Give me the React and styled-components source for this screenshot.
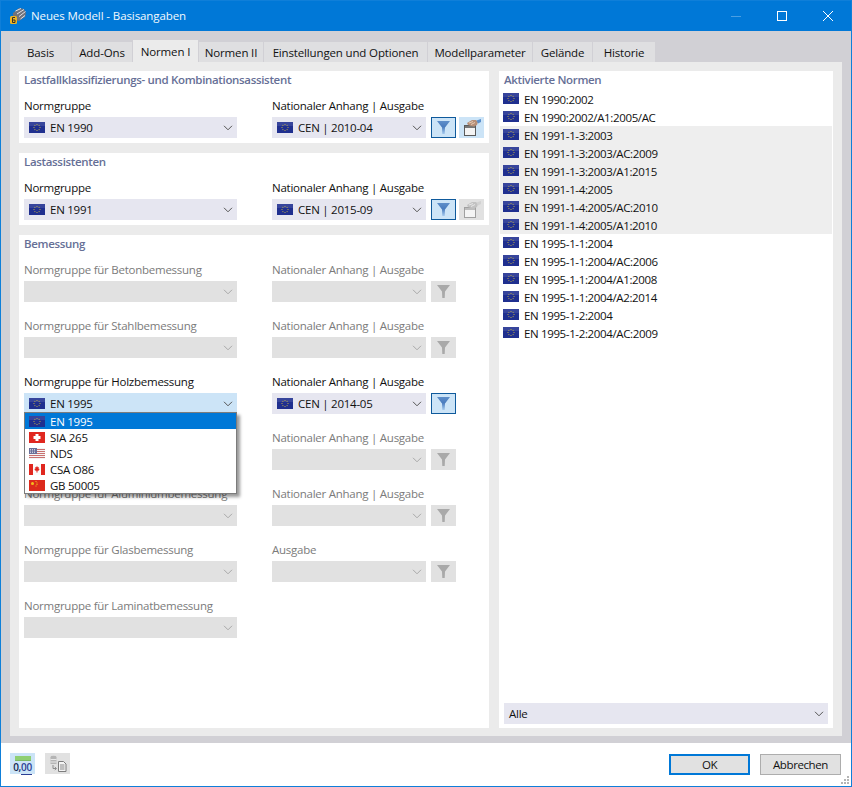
import React from "react"
import styled, { createGlobalStyle } from "styled-components"

const GlobalStyle = createGlobalStyle`
  html, body {
    margin: 0;
    padding: 0;
    background: #fff;
  }
  body {
    font-family: "Open Sans", "Noto Sans", "Liberation Sans", sans-serif;
    font-size: 11.5px;
    letter-spacing: -0.25px;
    color: #111;
  }
`

const Window = styled.div`
  width: 852px;
  height: 787px;
  box-sizing: border-box;
  border: 1px solid #0f7fd9;
  display: flex;
  flex-direction: column;
  background: #fff;
  overflow: hidden;
`

const TitleBar = styled.div`
  height: 30px;
  box-sizing: border-box;
  flex: none;
  background: #0078d7;
  color: #f2f8fd;
  display: flex;
  align-items: center;
  padding: 0 0 1px 8px;
  letter-spacing: -0.1px;
`

const TitleText = styled.span`
  margin-left: 4px;
  flex: 1;
`

const WinButton = styled.div`
  width: 46px;
  height: 30px;
  display: flex;
  align-items: center;
  justify-content: center;
`

const Body = styled.div`
  flex: 1;
  background: #d1d0d5;
  padding: 9px 9px 7px;
  display: flex;
  flex-direction: column;
  min-height: 0;
`

const TabStrip = styled.div`
  height: 22px;
  flex: none;
  display: flex;
  align-items: flex-end;
  gap: 1px;
`

const Tab = styled.div`
  width: ${(p) => p.$w}px;
  height: ${(p) => (p.$active ? 22 : 20)}px;
  background: ${(p) => (p.$active ? "#ebebeb" : "#dfdfe1")};
  display: flex;
  align-items: center;
  justify-content: center;
  white-space: nowrap;
  letter-spacing: -0.15px;
`

const TabPanel = styled.div`
  flex: 1;
  min-height: 0;
  background: #ebebeb;
  padding: 9px 9px 8px;
  display: grid;
  grid-template-columns: 470px 334px;
  gap: 10px;
`

const LeftColumn = styled.div`
  display: flex;
  flex-direction: column;
  gap: 10px;
`

const Section = styled.section`
  background: #fff;
  padding: 0 5px ${(p) => (p.$list ? 4 : 5)}px;
  flex: ${(p) => (p.$grow ? 1 : "none")};
  display: flex;
  flex-direction: column;
  position: relative;
`

const SectionTitle = styled.div`
  height: 18px;
  line-height: 18px;
  font-weight: 600;
  letter-spacing: -0.33px;
  color: #666f96;
  white-space: nowrap;
`

const Rows = styled.div`
  display: flex;
  flex-direction: column;
  gap: 16px;
  margin-top: 9px;
`

const Row = styled.div`
  display: grid;
  grid-template-columns: 243px 154px 25px 25px;
  column-gap: 5px;
  align-items: end;
`

const Field = styled.div`
  position: relative;
  width: ${(p) => (p.$first ? 213 : 154)}px;
  grid-column: ${(p) => (p.$first ? 1 : 2)};
`

const Label = styled.div`
  height: 16px;
  line-height: 16px;
  margin-bottom: 3px;
  white-space: nowrap;
  color: ${(p) => (p.$disabled ? "#7b7b7b" : "#111")};
`

const SelectBox = styled.div`
  height: 21px;
  box-sizing: border-box;
  display: flex;
  align-items: center;
  gap: 5px;
  padding: 0 5px;
  background: ${(p) =>
    p.$disabled ? "#e1e1e1" : p.$open ? "#cce4f7" : "#e6e6f0"};
`

const SelectValue = styled.span`
  flex: 1;
  white-space: nowrap;
`

const Chevron = styled.svg`
  width: 10px;
  height: 6px;
  margin-right: -1px;
  flex: none;
`

const ToolButton = styled.div`
  width: 25px;
  height: 21px;
  box-sizing: border-box;
  display: flex;
  align-items: center;
  justify-content: center;
  grid-column: ${(p) => p.$col};
  margin-left: ${(p) => (p.$col === 4 ? -2 : 0)}px;
  background: ${(p) => (p.$disabled ? "#e1e1e1" : "#cce4f7")};
  border: ${(p) => (p.$pressed ? "1px solid #0f5a9c" : "none")};
`

const FlagSvg = styled.svg`
  width: 16px;
  height: 11px;
  flex: none;
  display: block;
`

const Dropdown = styled.div`
  position: absolute;
  left: 0;
  top: 38px;
  width: 213px;
  box-sizing: border-box;
  background: #fff;
  border: 1px solid #7c7c7c;
  box-shadow: 3px 3px 3px rgba(0, 0, 0, 0.4);
  z-index: 5;
`

const DropdownItem = styled.div`
  height: 16px;
  display: flex;
  align-items: center;
  gap: 5px;
  padding-left: 4px;
  background: ${(p) => (p.$selected ? "#0078d7" : "transparent")};
  color: ${(p) => (p.$selected ? "#fff" : "#111")};
`

const NormList = styled.div`
  flex: 1;
  margin: 1px -4px 0;
`

const NormRow = styled.div`
  height: 18px;
  display: flex;
  gap: 5px;
  padding-left: 3px;
  line-height: 19px;
  letter-spacing: -0.36px;
  background: ${(p) => (p.$shaded ? "#eeeeee" : "transparent")};
`

const NormFlag = styled.div`
  padding-top: 3px;
`

const Footer = styled.div`
  height: 43px;
  flex: none;
  display: flex;
  align-items: center;
  padding: 0 10px 0 9px;
  position: relative;
`

const FootIcon = styled.div`
  width: 25px;
  height: 21px;
  margin-right: 10px;
  margin-top: -2px;
  display: flex;
  align-items: center;
  justify-content: center;
  background: ${(p) => (p.$disabled ? "#e1e1e1" : "#cce4f7")};
`

const Spacer = styled.div`
  flex: 1;
`

const DialogButton = styled.button`
  width: 81px;
  height: 21px;
  box-sizing: border-box;
  margin: -1px 0 0 ${(p) => (p.$primary ? 0 : 10)}px;
  padding: 0;
  background: #e1e1e1;
  border: ${(p) => (p.$primary ? "2px solid #0078d7" : "1px solid #adadad")};
  font: inherit;
  letter-spacing: -0.4px;
  color: #111;
`

const Grip = styled.svg`
  position: absolute;
  right: 1px;
  bottom: 1px;
  width: 10px;
  height: 10px;
`

const Flag = ({ code = "eu" }) => {
  if (code === "ch") {
    return (
      <FlagSvg viewBox="0 0 16 11">
        <rect width="16" height="11" fill="#e0271f" />
        <path d="M6.5 2h3v2h2v3h-2v2h-3V7h-2V4h2z" fill="#fff" />
      </FlagSvg>
    )
  }
  if (code === "us") {
    return (
      <FlagSvg viewBox="0 0 16 11">
        <rect width="16" height="11" fill="#f4f4f4" />
        {[1, 3, 5, 7, 9].map((y) => (
          <rect key={y} y={y} width="16" height="1" fill="#c9706f" />
        ))}
        <rect width="8" height="6" fill="#6a7098" />
        <path d="M1 1.5h6M1 3h6M1 4.5h6" stroke="#c8cbdc" strokeDasharray="1 1" />
      </FlagSvg>
    )
  }
  if (code === "ca") {
    return (
      <FlagSvg viewBox="0 0 16 11">
        <rect width="16" height="11" fill="#fbfbfb" />
        <rect width="4" height="11" fill="#e0271f" />
        <rect x="12" width="4" height="11" fill="#e0271f" />
        <path d="M8 2l1 1.500 1-.4-.4 2 1-.4-.6 1.800-1.500.2V8.500h-1V6.700L6 6.500l-.6-1.800 1 .4-.4-2 1 .4z" fill="#e0271f" />
      </FlagSvg>
    )
  }
  if (code === "cn") {
    return (
      <FlagSvg viewBox="0 0 16 11">
        <rect width="16" height="11" fill="#dc2a1c" />
        <circle cx="3.500" cy="3.500" r="1.500" fill="#f3c21b" />
        <path d="M6.500 1.500h1M7.500 3h1M7.500 4.500h1M6.500 6h1" stroke="#f3c21b" />
      </FlagSvg>
    )
  }
  const stars = [0, 1, 2, 3, 4, 5, 6, 7].map((i) => {
    const a = (i * Math.PI) / 4
    return [8 + Math.cos(a) * 3, 5.5 + Math.sin(a) * 3]
  })
  return (
    <FlagSvg viewBox="0 0 16 11">
      <rect width="16" height="11" fill="#1f2f8f" />
      <rect width="16" height="4" fill="#4a57a8" opacity="0.55" />
      {stars.map(([x, y], i) => (
        <rect key={i} x={x - 0.5} y={y - 0.5} width="1" height="1" fill="#b9a94a" />
      ))}
    </FlagSvg>
  )
}

const ChevronIcon = ({ disabled }) => (
  <Chevron viewBox="0 0 10 6">
    <path
      d="M1 .8l4 4 4-4"
      fill="none"
      stroke={disabled ? "#a9a9a9" : "#555"}
      strokeWidth="1"
    />
  </Chevron>
)

const FunnelIcon = ({ disabled }) => (
  <svg width="13" height="13" viewBox="0 0 13 13">
    <defs>
      <linearGradient id="funnelBlue" x1="0" y1="0" x2="0" y2="1">
        <stop offset="0" stopColor="#5f8fca" />
        <stop offset="0.45" stopColor="#4a7cbe" />
        <stop offset="1" stopColor="#a4c9ee" />
      </linearGradient>
    </defs>
    <path
      d="M0 0h13L8 6.500 7.700 13H5.300L5 6.500z"
      fill={disabled ? "#a9a9a9" : "url(#funnelBlue)"}
    />
  </svg>
)

const WizardIcon = ({ disabled }) => (
  <svg width="21" height="17" viewBox="0 0 21 17">
    <rect x="3.500" y="6.500" width="11" height="10" fill="#f4f4f4" stroke={disabled ? "#a0a0a0" : "#5a5a5a"} />
    <rect x="4" y="7" width="10" height="2" fill={disabled ? "#bdbdbd" : "#777"} />
    <path d="M6 4l5-3h4l2 2-1 3-3 1.500-3-.5-3-1z" fill={disabled ? "#c2c2c2" : "#b68f78"} />
    <path d="M8 4l4-1.500M10 5.500l4-2" stroke={disabled ? "#e8e8e8" : "#e6cdb8"} />
    <path d="M15.500 1.500L20 0v3l-3 1.500z" fill={disabled ? "#d2d2d2" : "#5c90cc"} />
  </svg>
)

const AppIcon = () => (
  <svg width="18" height="18" viewBox="0 0 18 18">
    <path d="M4 6l6-5 5 1 2 4-1 4-6 4-4-1-2-4z" fill="#70737c" />
    <path d="M6.500 4L12 1.500M8 7l7-4.500M10 9.500l6.500-5M11.500 12l4.500-3.500" stroke="#dfe1e8" />
    <rect x="1" y="9" width="7" height="8" rx="1.500" fill="#f0b520" />
    <path d="M6 10.500H3.500v5H6v-2.500H3.500" fill="none" stroke="#33302a" strokeWidth="1" />
  </svg>
)

const DecimalText = styled.div`
  font-family: "Open Sans", sans-serif;
  font-size: 10px;
  font-weight: 600;
  line-height: 10px;
  letter-spacing: -0.3px;
  color: #14264f;
  white-space: nowrap;
`

const Ruler = styled.div`
  width: 16px;
  height: 4px;
  background: #8fcf72;
  border-bottom: 1px solid #7cb765;
  margin-bottom: 1px;
`

const DecimalStack = styled.div`
  display: flex;
  flex-direction: column;
  align-items: center;
`

const Underlined = styled.span`
  color: #2b3f94;
  border-bottom: 1px solid #2b3f94;
`

const ExportIcon = () => (
  <svg width="18" height="17" viewBox="0 0 18 17">
    <ellipse cx="4.500" cy="2" rx="3" ry="1.300" fill="#b5b5b5" />
    <rect x="1.500" y="2" width="6" height="7" fill="#b5b5b5" />
    <path d="M1.500 4.500h6M1.500 7h6" stroke="#e8e8e8" />
    <path d="M4 10v3.500h3M5.800 12l1.700 1.500-1.700 1.500" fill="none" stroke="#8c8c8c" />
    <path d="M9.500 6.500h5l2.500 2.500v7.500H9.500z" fill="#f4f4f4" stroke="#7d7d7d" />
    <path d="M11 10h4.500M11 12h4.500M11 14h4.500" stroke="#8a8a8a" />
  </svg>
)

const dropdownItems = [
  { code: "eu", name: "EN 1995" },
  { code: "ch", name: "SIA 265" },
  { code: "us", name: "NDS" },
  { code: "ca", name: "CSA O86" },
  { code: "cn", name: "GB 50005" },
]

const NormSelect = ({ label, value, disabled, open, first }) => (
  <Field $first={first}>
    <Label $disabled={disabled}>{label}</Label>
    <SelectBox $disabled={disabled} $open={open}>
      {value && <Flag />}
      <SelectValue>{value}</SelectValue>
      <ChevronIcon disabled={disabled} />
    </SelectBox>
    {open && (
      <Dropdown>
        {dropdownItems.map((item, i) => (
          <DropdownItem key={item.name} $selected={i === 0}>
            <Flag code={item.code} />
            {item.name}
          </DropdownItem>
        ))}
      </Dropdown>
    )}
  </Field>
)

const tabs = [
  ["Basis", 61],
  ["Add-Ons", 60],
  ["Normen I", 65],
  ["Normen II", 64],
  ["Einstellungen und Optionen", 163],
  ["Modellparameter", 104],
  ["Gelände", 59],
  ["Historie", 62],
]

const designRows = [
  { label: "Normgruppe für Betonbemessung", second: "Nationaler Anhang | Ausgabe" },
  { label: "Normgruppe für Stahlbemessung", second: "Nationaler Anhang | Ausgabe" },
  { label: "Normgruppe für Holzbemessung", second: "Nationaler Anhang | Ausgabe", active: true },
  { label: "Normgruppe für Mauerwerksbemessung", second: "Nationaler Anhang | Ausgabe" },
  { label: "Normgruppe für Aluminiumbemessung", second: "Nationaler Anhang | Ausgabe" },
  { label: "Normgruppe für Glasbemessung", second: "Ausgabe" },
  { label: "Normgruppe für Laminatbemessung" },
]

const norms = [
  "EN 1990:2002",
  "EN 1990:2002/A1:2005/AC",
  "EN 1991-1-3:2003",
  "EN 1991-1-3:2003/AC:2009",
  "EN 1991-1-3:2003/A1:2015",
  "EN 1991-1-4:2005",
  "EN 1991-1-4:2005/AC:2010",
  "EN 1991-1-4:2005/A1:2010",
  "EN 1995-1-1:2004",
  "EN 1995-1-1:2004/AC:2006",
  "EN 1995-1-1:2004/A1:2008",
  "EN 1995-1-1:2004/A2:2014",
  "EN 1995-1-2:2004",
  "EN 1995-1-2:2004/AC:2009",
]

const App = () => (
  <Window>
    <GlobalStyle />
    <TitleBar>
      <AppIcon />
      <TitleText>Neues Modell - Basisangaben</TitleText>
      <WinButton>
        <svg width="10" height="10" viewBox="0 0 10 10">
          <path d="M0 5.500h10" stroke="#4a9fe3" />
        </svg>
      </WinButton>
      <WinButton>
        <svg width="10" height="10" viewBox="0 0 10 10">
          <rect x=".5" y=".5" width="9" height="9" fill="none" stroke="#fff" />
        </svg>
      </WinButton>
      <WinButton>
        <svg width="10" height="10" viewBox="0 0 10 10">
          <path d="M0 0l10 10M10 0L0 10" stroke="#fff" />
        </svg>
      </WinButton>
    </TitleBar>

    <Body>
      <TabStrip>
        {tabs.map(([name, w]) => (
          <Tab key={name} $w={w} $active={name === "Normen I"}>
            {name}
          </Tab>
        ))}
      </TabStrip>

      <TabPanel>
        <LeftColumn>
          <Section>
            <SectionTitle>Lastfallklassifizierungs- und Kombinationsassistent</SectionTitle>
            <Rows>
              <Row>
                <NormSelect first label="Normgruppe" value="EN 1990" />
                <NormSelect label="Nationaler Anhang | Ausgabe" value="CEN | 2010-04" />
                <ToolButton $col={3} $pressed><FunnelIcon /></ToolButton>
                <ToolButton $col={4}><WizardIcon /></ToolButton>
              </Row>
            </Rows>
          </Section>

          <Section>
            <SectionTitle>Lastassistenten</SectionTitle>
            <Rows>
              <Row>
                <NormSelect first label="Normgruppe" value="EN 1991" />
                <NormSelect label="Nationaler Anhang | Ausgabe" value="CEN | 2015-09" />
                <ToolButton $col={3} $pressed><FunnelIcon /></ToolButton>
                <ToolButton $col={4} $disabled><WizardIcon disabled /></ToolButton>
              </Row>
            </Rows>
          </Section>

          <Section $grow>
            <SectionTitle>Bemessung</SectionTitle>
            <Rows>
              {designRows.map((row) => (
                <Row key={row.label}>
                  <NormSelect
                    first
                    label={row.label}
                    value={row.active ? "EN 1995" : ""}
                    disabled={!row.active}
                    open={row.active}
                  />
                  {row.second && (
                    <NormSelect
                      label={row.second}
                      value={row.active ? "CEN | 2014-05" : ""}
                      disabled={!row.active}
                    />
                  )}
                  {row.second && (
                    <ToolButton $col={3} $pressed={row.active} $disabled={!row.active}>
                      <FunnelIcon disabled={!row.active} />
                    </ToolButton>
                  )}
                </Row>
              ))}
            </Rows>
          </Section>
        </LeftColumn>

        <Section $grow $list>
          <SectionTitle>Aktivierte Normen</SectionTitle>
          <NormList>
            {norms.map((norm, i) => (
              <NormRow key={norm} $shaded={i >= 2 && i <= 7}>
                <NormFlag><Flag /></NormFlag>
                {norm}
              </NormRow>
            ))}
          </NormList>
          <SelectBox>
            <SelectValue>Alle</SelectValue>
            <ChevronIcon />
          </SelectBox>
        </Section>
      </TabPanel>
    </Body>

    <Footer>
      <FootIcon>
        <DecimalStack>
          <Ruler />
          <DecimalText>0,<Underlined>00</Underlined></DecimalText>
        </DecimalStack>
      </FootIcon>
      <FootIcon $disabled><ExportIcon /></FootIcon>
      <Spacer />
      <DialogButton $primary>OK</DialogButton>
      <DialogButton>Abbrechen</DialogButton>
      <Grip viewBox="0 0 10 10">
        <path d="M7 1h2v2H7zM4 4h2v2H4zM7 4h2v2H7zM1 7h2v2H1zM4 7h2v2H4zM7 7h2v2H7z" fill="#b5b5b5" />
      </Grip>
    </Footer>
  </Window>
)

export default App
